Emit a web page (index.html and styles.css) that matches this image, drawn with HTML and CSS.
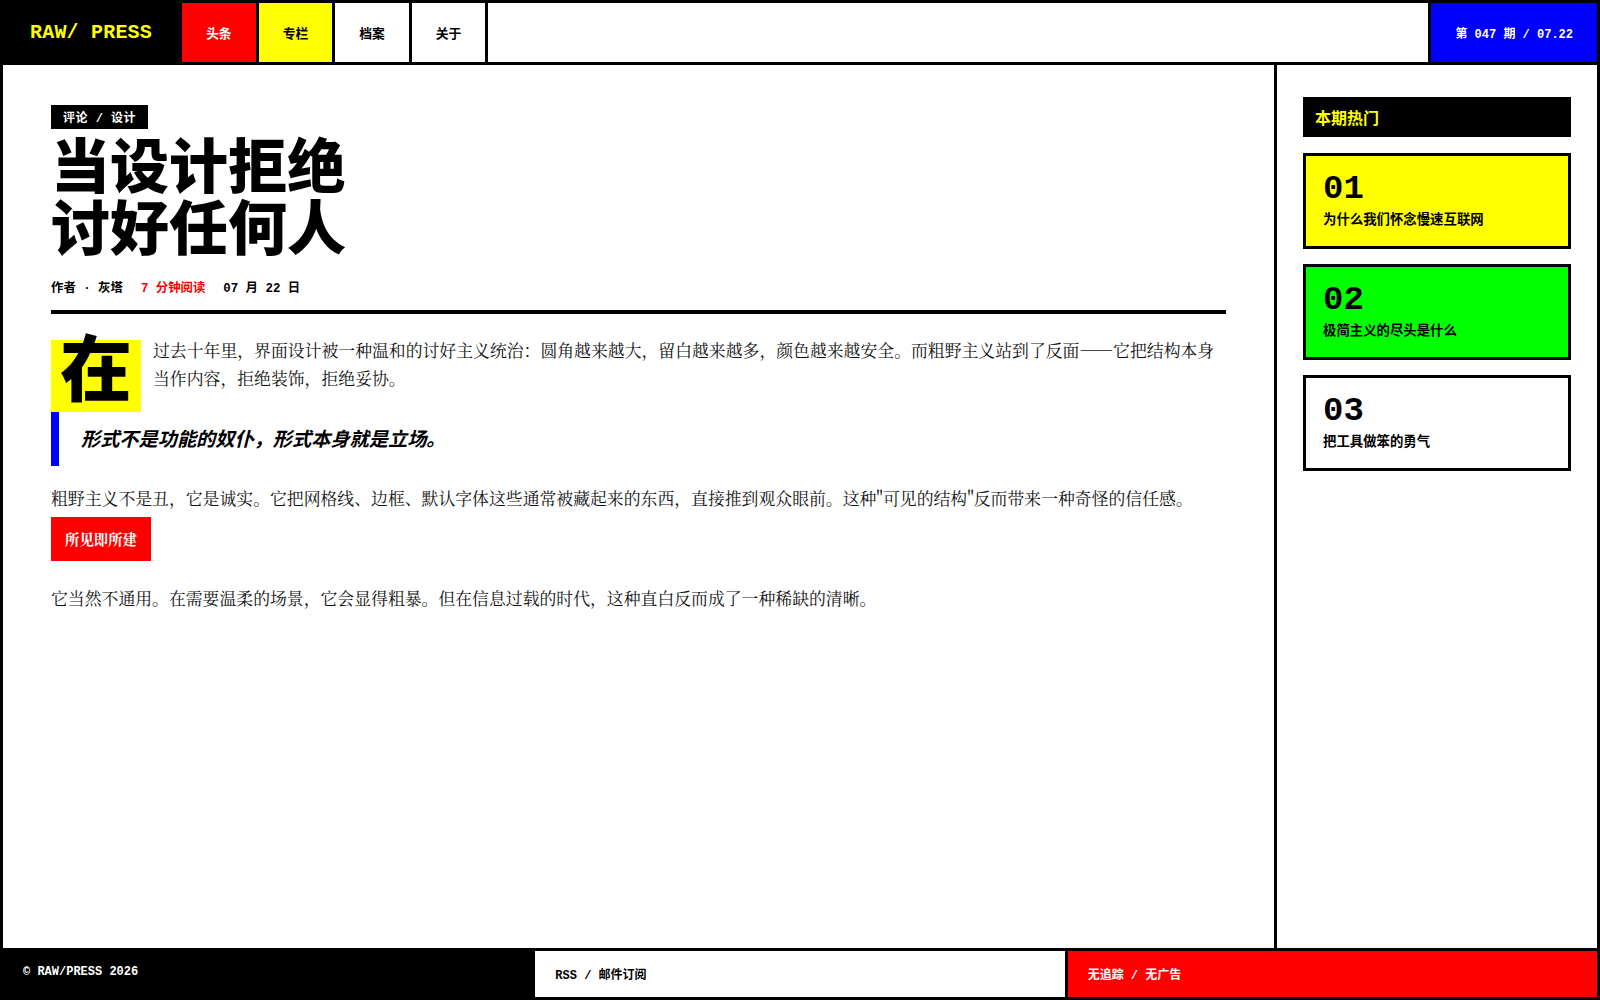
FILE: index.html
```html
<!DOCTYPE html>
<html lang="zh-CN">
<head>
<meta charset="UTF-8">
<title>RAW/ PRESS — 当设计拒绝讨好任何人</title>
<link rel="stylesheet" href="styles.css">
</head>
<body>
    <header class="masthead">
        <div class="logo">RAW/ PRESS</div>
        <a class="nav-item nav-red" href="#">头条</a>
        <a class="nav-item nav-yellow" href="#">专栏</a>
        <a class="nav-item" href="#">档案</a>
        <a class="nav-item" href="#">关于</a>
        <div class="spacer"></div>
        <div class="issue">第 047 期 / 07.22</div>
    </header>

    <main class="main">
        <article class="article">
            <div class="article-head">
                <div class="tag">评论 / 设计</div>
                <h1 class="title">当设计拒绝<br>讨好任何人</h1>
                <div class="meta">
                    <span>作者 · 灰塔</span>
                    <span class="meta-red">7 分钟阅读</span>
                    <span>07 月 22 日</span>
                </div>
            </div>

            <p><span class="dropcap">在</span>过去十年里，界面设计被一种温和的讨好主义统治：圆角越来越大，留白越来越多，颜色越来越安全。而粗野主义站到了反面——它把结构本身当作内容，拒绝装饰，拒绝妥协。</p>

            <blockquote class="quote">形式不是功能的奴仆，形式本身就是立场。</blockquote>

            <p>粗野主义不是丑，它是诚实。它把网格线、边框、默认字体这些通常被藏起来的东西，直接推到观众眼前。这种"可见的结构"反而带来一种奇怪的信任感。<span class="stamp">所见即所建</span></p>

            <p>它当然不通用。在需要温柔的场景，它会显得粗暴。但在信息过载的时代，这种直白反而成了一种稀缺的清晰。</p>
        </article>

        <aside class="sidebar">
            <div class="side-head">本期热门</div>
            <div class="card card-yellow">
                <div class="card-num">01</div>
                <div class="card-title">为什么我们怀念慢速互联网</div>
            </div>
            <div class="card card-green">
                <div class="card-num">02</div>
                <div class="card-title">极简主义的尽头是什么</div>
            </div>
            <div class="card">
                <div class="card-num">03</div>
                <div class="card-title">把工具做笨的勇气</div>
            </div>
        </aside>
    </main>

    <footer class="footer">
        <div class="foot-cell foot-black">© RAW/PRESS 2026</div>
        <div class="foot-cell">RSS / 邮件订阅</div>
        <div class="foot-cell foot-red">无追踪 / 无广告</div>
    </footer>
</body>
</html>
```

FILE: styles.css
```css
* {
    box-sizing: border-box;
}
body {
    margin: 0;
    height: 100vh;
    padding: 3px;
    background: #000;
    display: grid;
    grid-template-rows: 59px 1fr 46px;
    gap: 3px;
    font-family: "Liberation Mono", "Noto Sans CJK SC", monospace;
    color: #000;
}

/* masthead */
.masthead {
    display: flex;
    gap: 3px;
}
.logo {
    display: flex;
    align-items: center;
    padding: 0 27px;
    background: #000;
    color: #ffff00;
    font-size: 20px;
    font-weight: 700;
    letter-spacing: 0.2px;
}
.nav-item {
    display: flex;
    align-items: center;
    padding: 0 24px;
    background: #fff;
    color: #000;
    font-size: 12.8px;
    font-weight: 700;
    text-decoration: none;
}
.nav-red {
    background: #ff0000;
    color: #fff;
}
.nav-yellow {
    background: #ffff00;
}
.spacer {
    flex: 1;
    background: #fff;
}
.issue {
    display: flex;
    align-items: center;
    padding: 0 24px;
    background: #0000ff;
    color: #fff;
    font-size: 12px;
    font-weight: 700;
}

/* main */
.main {
    display: grid;
    grid-template-columns: 1fr 320px;
    gap: 3px;
    min-height: 0;
}
.article {
    background: #fff;
    padding: 40px 48px;
}
.article-head {
    padding-bottom: 14px;
    border-bottom: 4px solid #000;
    margin-bottom: 22px;
}
.tag {
    width: fit-content;
    padding: 3px 12px;
    background: #000;
    color: #fff;
    font-size: 12px;
    font-weight: 700;
    letter-spacing: 0.5px;
}
.title {
    margin: 13px 0 12px;
    font-size: 59px;
    line-height: 62px;
    font-weight: 900;
}
.meta {
    display: flex;
    gap: 18px;
    font-size: 12.4px;
    font-weight: 700;
}
.meta-red {
    color: #ff0000;
}

.article p {
    margin: 0 0 18px;
    font-family: "Noto Serif CJK SC", "Liberation Serif", serif;
    font-size: 16.85px;
    line-height: 28px;
    color: #111;
}
.dropcap {
    float: left;
    margin: 4px 12px 0 0;
    padding: 0 9px;
    background: #ffff00;
    color: #000;
    font-family: "Liberation Mono", "Noto Sans CJK SC", monospace;
    font-size: 72px;
    line-height: 1;
    font-weight: 900;
}
.quote {
    margin: 0 0 18px;
    padding: 14px 22px;
    border-left: 8px solid #0000ff;
    font-size: 19.2px;
    font-weight: 700;
    font-style: italic;
}
.stamp {
    display: inline-block;
    vertical-align: top;
    margin: 5px 0;
    padding: 8px 14px;
    background: #ff0000;
    color: #fff;
    font-size: 14.4px;
    font-weight: 700;
}

/* sidebar */
.sidebar {
    background: #fff;
    padding: 32px 26px;
}
.side-head {
    height: 40px;
    padding: 8px 12px;
    margin-bottom: 16px;
    background: #000;
    color: #ffff00;
    font-size: 16px;
    font-weight: 700;
}
.card {
    border: 3px solid #000;
    padding: 16px 17px;
    margin-bottom: 15px;
    background: #fff;
}
.card-yellow {
    background: #ffff00;
}
.card-green {
    background: #00ff00;
}
.card-num {
    font-size: 34px;
    line-height: 1;
    font-weight: 700;
}
.card-title {
    margin-top: 6px;
    font-size: 13.4px;
    line-height: 18px;
    font-weight: 700;
}

/* footer */
.footer {
    display: grid;
    grid-template-columns: 1fr 1fr 1fr;
    gap: 3px;
}
.foot-cell {
    padding: 14px 20px;
    background: #fff;
    font-size: 12px;
    font-weight: 700;
}
.foot-black {
    background: #000;
    color: #fff;
}
.foot-red {
    background: #ff0000;
    color: #fff;
}
```
